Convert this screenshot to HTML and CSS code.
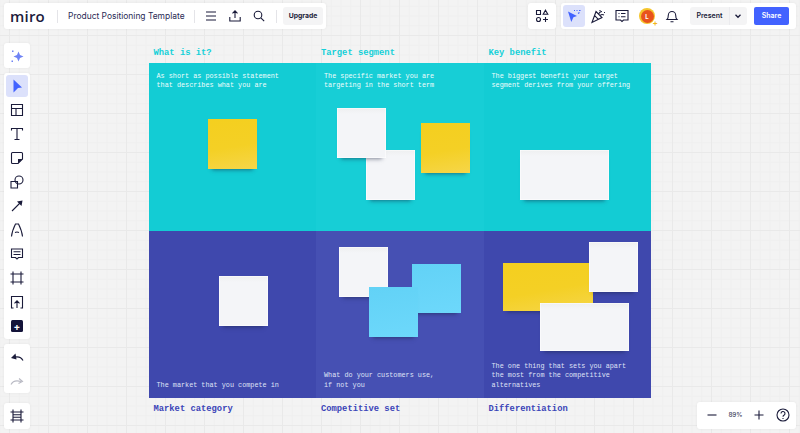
FILE: index.html
```html
<!DOCTYPE html>
<html lang="en">
<head>
<meta charset="utf-8">
<title>Product Positioning Template</title>
<link rel="stylesheet" href="styles.css">
</head>
<body>
<main class="canvas">
  <section class="template">
    <div class="labels">
      <h2 class="label teal-label">What is it?</h2>
      <h2 class="label teal-label">Target segment</h2>
      <h2 class="label teal-label">Key benefit</h2>
    </div>
    <div class="board">
      <div class="cell teal"><p>As short as possible statement<br>that describes what you are</p></div>
      <div class="cell teal mid"><p>The specific market you are<br>targeting in the short term</p></div>
      <div class="cell teal"><p>The biggest benefit your target<br>segment derives from your offering</p></div>
      <div class="cell indigo"><p>The market that you compete in</p></div>
      <div class="cell indigo mid"><p>What do your customers use,<br>if not you</p></div>
      <div class="cell indigo"><p>The one thing that sets you apart<br>the most from the competitive<br>alternatives</p></div>

      <div class="sticky yellow s1"></div>
      <div class="sticky white s3"></div>
      <div class="sticky white s2"></div>
      <div class="sticky yellow s4"></div>
      <div class="sticky white s5"></div>
      <div class="sticky white s6"></div>
      <div class="sticky white s7"></div>
      <div class="sticky blue s8"></div>
      <div class="sticky blue s9"></div>
      <div class="sticky yellow s10"></div>
      <div class="sticky white s11"></div>
      <div class="sticky white s12"></div>
    </div>
    <div class="labels">
      <h2 class="label indigo-label">Market category</h2>
      <h2 class="label indigo-label">Competitive set</h2>
      <h2 class="label indigo-label">Differentiation</h2>
    </div>
  </section>
</main>

<header class="panel top-left">
  <span class="logo">miro</span>
  <span class="sep"></span>
  <span class="doc-title">Product Positioning Template</span>
  <span class="sep"></span>
  <svg class="icon menu-i" viewBox="0 0 14 14"><path d="M2 3h10M2 7h10M2 11h10"/></svg>
  <svg class="icon share-i" viewBox="0 0 14 14"><path d="M7 9V2M4.500 4.300 7 1.800l2.500 2.500M1.800 8v4h10.400V8"/></svg>
  <svg class="icon search-i" viewBox="0 0 14 14"><circle cx="6" cy="6" r="3.800"/><path d="m8.800 8.800 3.400 3.400"/></svg>
  <span class="sep sep-end"></span>
  <span class="upgrade">Upgrade</span>
</header>

<div class="panel top-apps">
  <svg class="icon" viewBox="0 0 14 14"><path d="M1.500 1.500h4v4h-4zM10.500 1.200l2.300 4H8.200zM5.500 10.500a2 2 0 1 1-4 0 2 2 0 0 1 4 0zM10.500 8v5M8 10.500h5"/></svg>
</div>

<div class="panel top-right">
  <span class="collab-active">
    <svg class="icon-lg" viewBox="0 0 16 16"><path class="blue-fill" d="M2 3.500 11 8l-3.600 1.300L5.300 14z"/><path class="blue-line" d="M8 2.500h1M10.500 2.500h1M13 2.500h1.500M12 5.500l1.500-1"/></svg>
  </span>
  <svg class="icon-lg party" viewBox="0 0 16 16"><path d="M6 3.500 12 9.500 2 14.500zM4.700 7.700l3.600 3.600M9 5.500c.5-1.500 1.500-2 3-2M10.500 7c1-.6 2-.7 3.500 0M10 2v1M14 4.500h1"/></svg>
  <svg class="icon-lg comment" viewBox="0 0 16 16"><path d="M2 2.500h12v9.500H9.500L8 13.500 6.500 12H2zM4.500 5.500h1M7 5.500h4.500M4.500 8.700h1M7 8.700h4.500"/></svg>
  <span class="avatar"><span class="avatar-in">L</span><span class="spark">+</span></span>
  <svg class="icon-lg bell" viewBox="0 0 16 16"><path d="M3 11.500c1-1 1.300-2 1.300-4.300a3.700 3.700 0 0 1 7.400 0c0 2.300.3 3.300 1.300 4.300zM6.500 13.800h3"/></svg>
  <span class="present"><span class="present-t">Present</span><svg class="chev" viewBox="0 0 8 8"><path d="M1.500 2.800 4 5.300l2.500-2.500"/></svg></span>
  <span class="share-btn">Share</span>
</div>

<nav class="panel left ai">
  <svg class="icon-lg" viewBox="0 0 16 16"><path class="ai-fill" d="M9.500 3.500 11 7l3.500 1.500L11 10l-1.500 3.500L8 10 4.500 8.500 8 7z"/><path class="ai-fill" d="M3 2.500h1.500v1.500H3zM2.500 12.500h1.500V14H2.500z"/></svg>
</nav>

<nav class="panel left tools">
  <span class="tool active"><svg class="icon-lg" viewBox="0 0 16 16"><path class="blue-fill" d="M4.500 1.500 13 9.500 9 10l-4.500 4.500z"/></svg></span>
  <span class="tool"><svg class="icon-lg" viewBox="0 0 16 16"><path d="M2.500 2.500h11v11h-11zM2.500 6.500h11M7 6.500v7"/></svg></span>
  <span class="tool"><svg class="icon-lg" viewBox="0 0 16 16"><path d="M2.500 4.500v-2h11v2M8 2.500v11M5.500 13.500h5"/></svg></span>
  <span class="tool"><svg class="icon-lg" viewBox="0 0 16 16"><path d="M2.500 3.500a1 1 0 0 1 1-1h9a1 1 0 0 1 1 1V9l-4.500 4.500h-5.500a1 1 0 0 1-1-1z"/><path class="dark-fill" d="M9 9h4.500L9 13.500z"/></svg></span>
  <span class="tool"><svg class="icon-lg" viewBox="0 0 16 16"><path d="M2 7.500h6.500V14H2z"/><circle cx="10" cy="6" r="4"/></svg></span>
  <span class="tool"><svg class="icon-lg" viewBox="0 0 16 16"><path d="M3 13 12 4"/><path class="dark-fill" d="M13.500 2.500 12.500 8 8 3.500z"/></svg></span>
  <span class="tool"><svg class="icon-lg" viewBox="0 0 16 16"><path d="M2.500 14.500C3 9 5 5 6.500 2h3c1.500 3 3.500 7 4 12.500M6 10.500c1.300-.6 2.700-.6 4 0"/></svg></span>
  <span class="tool"><svg class="icon-lg" viewBox="0 0 16 16"><path d="M2.500 3h11v8.500H9.500L8 13 6.500 11.500h-4zM4.500 5.700h7M4.500 8.500h7"/></svg></span>
  <span class="tool"><svg class="icon-lg" viewBox="0 0 16 16"><path d="M4 1.500v13M12 1.500v13M1.500 4h13M1.500 12h13"/></svg></span>
  <span class="tool"><svg class="icon-lg" viewBox="0 0 16 16"><path d="M4.500 14H2.500V2.500h11V14h-2M8 14V7M5.500 9.300 8 6.800l2.500 2.500"/></svg></span>
  <span class="tool"><span class="add">+</span></span>
</nav>

<nav class="panel left history">
  <span class="tool"><svg class="icon-lg" viewBox="0 0 16 16"><path d="M14 11.500C12.500 8.500 9 7 4 8.500"/><path class="dark-fill" d="M2 9l4.500-4.500 1 6z"/></svg></span>
  <span class="tool"><svg class="icon-lg muted" viewBox="0 0 16 16"><path d="M2 11.500C3.500 8.500 7 7 12 8.500M10 5.500l3.500 3-4 2"/></svg></span>
</nav>

<nav class="panel left frames">
  <svg class="icon-lg" viewBox="0 0 16 16"><path d="M4 1.500v13M12 1.500v13M1.500 4h13M1.500 12h13M4 6.700h8M4 9.300h8"/></svg>
</nav>

<div class="panel zoom">
  <svg class="icon-lg" viewBox="0 0 16 16"><path d="M3.500 8h9"/></svg>
  <span class="zoom-val">89%</span>
  <svg class="icon-lg zoom-plus" viewBox="0 0 16 16"><path d="M3.500 8h9M8 3.500v9"/></svg>
  <svg class="icon-lg zoom-help" viewBox="0 0 16 16"><circle cx="8" cy="8" r="6"/><path d="M6 6.500a2 2 0 1 1 3 1.700c-.7.400-1 .8-1 1.500M8 11v1"/></svg>
</div>
</body>
</html>
```

FILE: styles.css
```css
* { box-sizing: border-box; }
html, body { margin: 0; height: 100%; overflow: hidden; }
body { font-family: Inter, "Liberation Sans", sans-serif; color: #1a1b3a; background: #f2f2f2; }

.canvas {
  position: relative;
  width: 800px;
  height: 433px;
  overflow: hidden;
  background-color: #f3f3f3;
  background-image:
    linear-gradient(#e9e9e9 1px, transparent 1px),
    linear-gradient(90deg, #e9e9e9 1px, transparent 1px),
    linear-gradient(#efefef 1px, transparent 1px),
    linear-gradient(90deg, #efefef 1px, transparent 1px);
  background-size: 39px 39px, 39px 39px, 9.75px 9.75px, 9.75px 9.75px;
  background-position: 0 35px, 9px 0, 0 35px, 9px 0;
}

/* template on the canvas */
.template { position: absolute; left: 148.500px; top: 44px; width: 502px; }
.labels { display: grid; grid-template-columns: 167.500px 167.500px 167px; height: 19px; }
.label {
  margin: 0;
  padding-left: 5px;
  font: bold 8.800px/18px "Liberation Mono", monospace;
}
.teal-label { color: #14d0d8; }
.indigo-label { color: #3b45b8; line-height: 22px; }

.board {
  position: relative;
  display: grid;
  grid-template-columns: 167.500px 167.500px 167px;
  grid-template-rows: 167.500px 167.500px;
}
.cell {
  display: flex;
  padding: 8.500px 8px 8px;
  font: 6.800px/9.300px "Liberation Mono", monospace;
}
.cell p { margin: 0; }
.teal { background: #13ccd4; color: #effdfd; align-items: flex-start; }
.teal.mid { background: #17ced6; }
.indigo { background: #3f48ad; color: #dfe2f6; align-items: flex-end; }
.indigo.mid { background: #4650b3; }

.sticky {
  position: absolute;
  width: 49.500px;
  height: 49.500px;
  box-shadow: 0 5px 4px -4px rgba(20, 30, 60, .5);
}
.yellow { background: linear-gradient(170deg, #f4cf1f 0%, #f4d025 55%, #f6d649 100%); }
.white {
  background: linear-gradient(#eeeff0, #f4f5f8 12%);
  box-shadow: 0 5px 4px -4px rgba(20, 30, 60, .5), inset 0 0 0 .5px #fff;
}
.blue { background: linear-gradient(170deg, #62d2f6, #6dd8fb); }
.s1 { left: 59px; top: 56px; }
.s2 { left: 188px; top: 45px; }
.s3 { left: 217px; top: 87px; }
.s4 { left: 272px; top: 60px; }
.s5 { left: 371px; top: 87px; width: 89.500px; }
.s6 { left: 70px; top: 213px; }
.s7 { left: 190px; top: 184px; }
.s8 { left: 263px; top: 200.500px; }
.s9 { left: 220px; top: 224px; }
.s10 { left: 354px; top: 199.500px; width: 90px; height: 48.500px; }
.s11 { left: 440px; top: 179px; }
.s12 { left: 391px; top: 239.500px; width: 89.500px; height: 48.500px; }

/* floating toolbars */
.panel {
  position: absolute;
  display: flex;
  align-items: center;
  background: #fff;
  border-radius: 3px;
  box-shadow: 0 0 3px rgba(0, 0, 0, .06);
}
.icon, .icon-lg { fill: none; stroke: #1a1b3a; stroke-width: 1.100; flex: none; }
.icon { width: 14px; height: 14px; }
.icon-lg { width: 16px; height: 16px; }
.muted { stroke: #b9bac4; }
.blue-fill { fill: #4262ff; stroke: none; }
.blue-line { stroke: #4262ff; }
.dark-fill { fill: #1a1b3a; stroke: none; }
.ai-fill { fill: #6f83f5; stroke: none; }

.top-left { left: 4px; top: 3px; width: 322px; height: 26px; padding-left: 6px; }
.logo { width: 46.500px; font: 600 15px/26px "Open Sans", sans-serif; letter-spacing: .2px; color: #1c1c3c; }
.sep { width: 1px; height: 13px; background: #e4e4e8; flex: none; }
.doc-title { margin-left: 10.500px; width: 126px; font-size: 8.450px; white-space: nowrap; color: #2a2b55; }
.menu-i { margin-left: 9px; }
.share-i { margin-left: 9.500px; }
.search-i { margin-left: 10.500px; }
.sep-end { margin-left: 10px; }
.upgrade {
  margin-left: 6px;
  width: 40px;
  height: 18px;
  text-align: center;
  font: 700 6.800px/18px Inter, sans-serif;
  background: #f4f4f5;
  border-radius: 3px;
}

.top-apps { left: 528px; top: 3px; width: 28px; height: 26px; justify-content: center; }
.top-right { left: 561px; top: 3px; width: 235px; height: 26px; padding-left: 2px; }
.collab-active {
  display: flex;
  align-items: center;
  justify-content: center;
  width: 22px;
  height: 22px;
  background: #dce1fb;
  border-radius: 3px;
}
.party { margin-left: 5px; }
.comment { margin-left: 8px; }
.avatar {
  position: relative;
  margin-left: 9px;
  width: 16px;
  height: 16px;
  padding: 1.500px;
  border-radius: 50%;
  background: #f5c52c;
  flex: none;
}
.avatar-in {
  display: block;
  width: 13px;
  height: 13px;
  border-radius: 50%;
  background: #e8531d;
  color: #fff;
  text-align: center;
  font: 700 6px/13px Inter, sans-serif;
}
.spark { position: absolute; right: -3px; bottom: -3px; font: 700 8px/8px Inter, sans-serif; color: #f0b71f; }
.bell { margin-left: 9px; }
.present {
  display: flex;
  align-items: center;
  margin-left: 10px;
  width: 57px;
  height: 18px;
  background: #f4f4f5;
  border-radius: 3px;
}
.present-t { width: 40px; text-align: center; font: 600 7px/18px Inter, sans-serif; border-right: 1px solid #ebebee; }
.chev { width: 8px; height: 8px; margin-left: 4px; fill: none; stroke: #1a1b3a; stroke-width: 1.300; }
.share-btn {
  margin-left: 7px;
  width: 35px;
  height: 18px;
  text-align: center;
  font: 600 7px/18px Inter, sans-serif;
  color: #fff;
  background: #4262ff;
  border-radius: 2px;
}

.left { left: 4px; width: 26px; flex-direction: column; justify-content: center; }
.ai { top: 43px; height: 25px; }
.tools { top: 73px; height: 266px; padding-top: 1px; justify-content: flex-start; }
.history { top: 344px; height: 49px; padding-top: 1px; justify-content: flex-start; }
.frames { top: 402.500px; height: 26.500px; }
.tool { display: flex; align-items: center; justify-content: center; width: 22px; height: 24px; flex: none; }
.tool.active { height: 22px; margin: 1px 0; background: #dce1fb; border-radius: 3px; }
.add {
  width: 12px;
  height: 12px;
  background: #14143a;
  border-radius: 1.500px;
  color: #fff;
  text-align: center;
  font: 700 10px/12px Inter, sans-serif;
}

.zoom { left: 697px; top: 402px; width: 99px; height: 26.500px; padding-left: 6.500px; }
.zoom-val { margin-left: 5px; width: 22px; font-size: 6.300px; font-weight: 500; color: #44465e; text-align: center; }
.zoom-plus { margin-left: 4px; }
.zoom-help { margin-left: 8.500px; }
```
